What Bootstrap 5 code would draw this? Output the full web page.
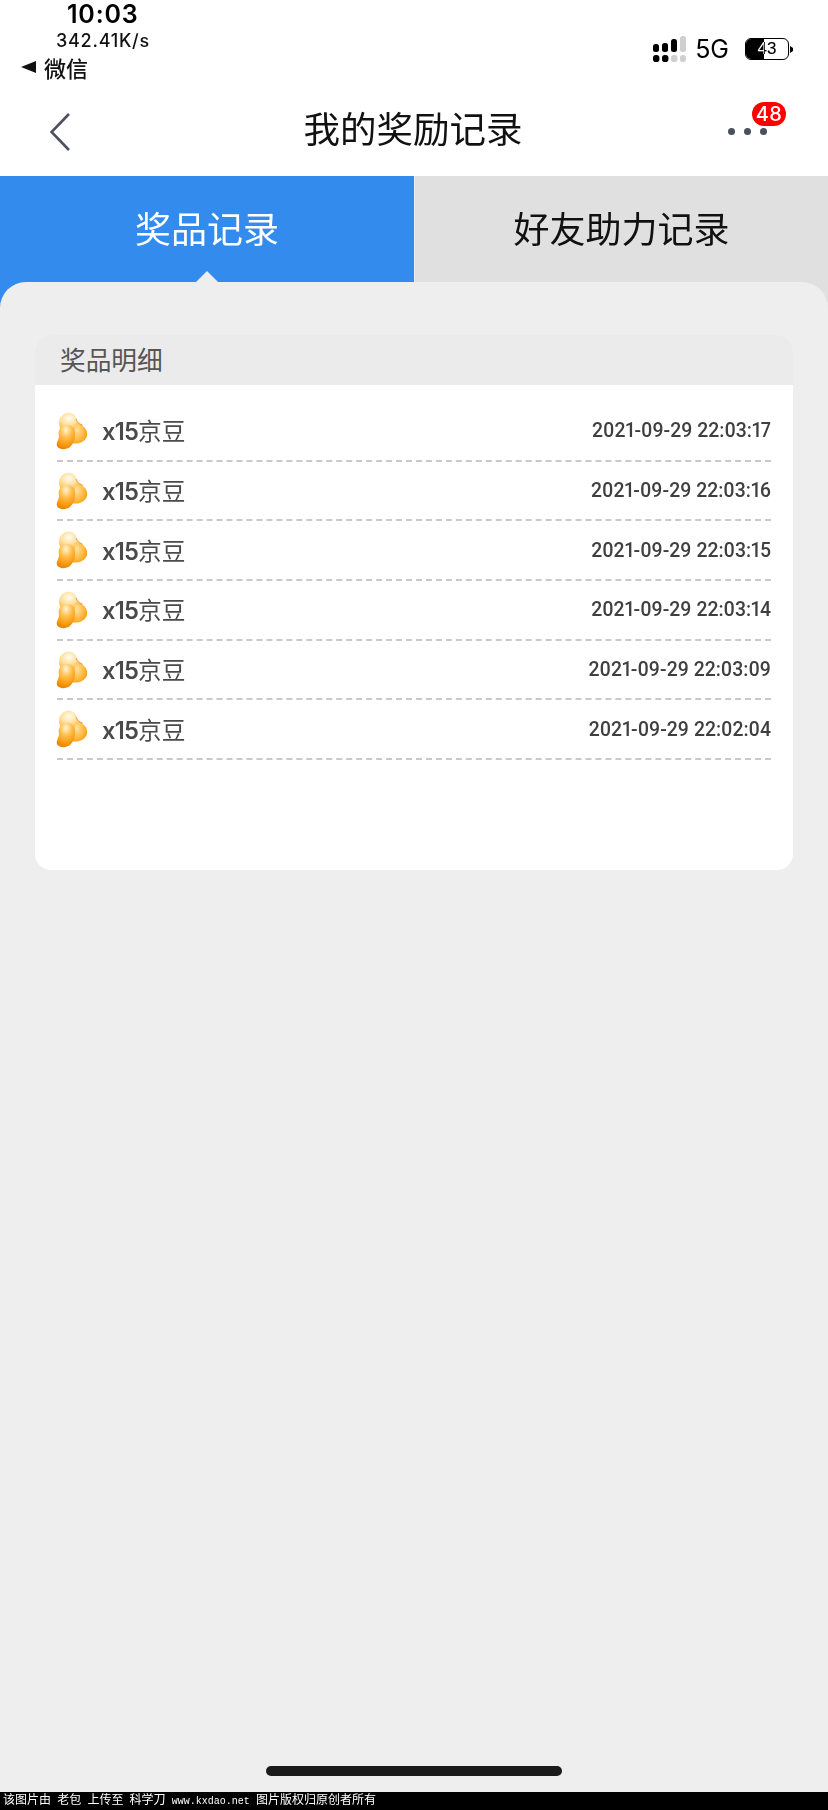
<!DOCTYPE html>
<html lang="zh">
<head>
  <meta charset="UTF-8" />
  <meta name="viewport" content="width=device-width, initial-scale=1.0"/>
  <title>我的奖励记录</title>
  <link href="https://cdn.jsdelivr.net/npm/bootstrap@5.3.3/dist/css/bootstrap.min.css" rel="stylesheet">
  <style>
    html, body { margin: 0; background: #eee; }
    body { font-family: "Noto Sans CJK SC", sans-serif; }
    .screen { width: 828px; height: 1810px; overflow: hidden; }
    .top-area { height: 176px; background: #fff; }
    .status-bar { height: 84px; padding: 0 35px 0 21px; }
    .status-left { width: 162px; }
    .clock { font: 600 25px/28px Inter, "Liberation Sans", sans-serif; padding-left: 46px; color: #000; letter-spacing: .8px; }
    .speed { font: 500 18px/22px Inter, "Liberation Sans", sans-serif; padding-left: 35px; color: #111; margin-top: 2px; letter-spacing: .75px; white-space: nowrap; }
    .back-app { font-size: 22px; font-weight: 500; line-height: 30px; color: #111; }
    .back-app svg { margin-right: 8px; }
    .status-right { margin-top: 35px; }
    .net { font: 400 25px/28px Inter, "Liberation Sans", sans-serif; color: #000; margin: 0 16px 0 9px; }
    .batt { width: 44px; height: 22px; border: 1.5px solid #000; border-radius: 6px; overflow: hidden; }
    .batt-fill { width: 43%; background: #000; }
    .batt-num { font: 500 17px/19px "Liberation Sans", sans-serif; left: 0; right: 0; top: 0; text-align: center; color: #fff; mix-blend-mode: difference; }
    .title-bar { height: 92px; }
    .title-text { font-size: 36.5px; line-height: 48px; color: #111; margin-top: -4px; margin-right: 2px; }
    .back-btn { left: 50px; top: 29px; }
    .more-dots { left: 728px; top: 44px; }
    .dot-item { width: 7px; height: 7px; background: #4b5060; border-radius: 50%; margin-right: 9px; }
    .more-count { left: 752px; top: 18px; width: 34px; height: 24px; background: #f00; color: #fff; border-radius: 12px; font: 500 20px/24px Inter, "Liberation Sans", sans-serif; text-align: center; letter-spacing: .5px; }
    .tab-strip { height: 132px; }
    .tab-on { width: 414px; background: #338bee; color: #fff; }
    .tab-off { width: 413px; margin-left: 1px; background: #e0e0e0; color: #111; }
    .tab-label { font-size: 36px; line-height: 102px; text-align: center; }
    .prize-panel { margin-top: -26px; background: #eee; border-radius: 26px 26px 0 0; padding: 53px 35px 0; }
    .tab-arrow { left: 196px; top: -11px; width: 0; height: 0; border-left: 11px solid transparent; border-right: 11px solid transparent; border-bottom: 11px solid #eee; }
    .prize-box { height: 535px; background: #fff; border-radius: 16px; overflow: hidden; }
    .prize-head { height: 50px; background: #ebebeb; padding-left: 25px; font-size: 25.7px; line-height: 47px; color: #555; }
    .prize-list { padding: 17px 22px 0; }
    .prize-row { height: 59.7px; border-bottom: 2px dashed #c9c9c9; }
    .bean-icon { margin-left: -1px; }
    .prize-name { font-size: 23.7px; color: #4a4a4a; margin-left: 14px; line-height: 32px; margin-top: 1px; }
    .prize-name b { font: 600 23.7px/32px Inter, Roboto, sans-serif; letter-spacing: -.8px; }
    .prize-time { font: 500 19.4px/26px Roboto, sans-serif; font-variant-numeric: proportional-nums; color: #3f3f3f; margin-top: 1px; }
    .home-line { width: 296px; height: 10px; border-radius: 5px; background: #1a1a1a; margin: 0 auto 16px; flex: none; }
    .notice { height: 18px; background: #000; color: #fff; font: 12px/18px "Liberation Mono", "Noto Sans CJK SC", monospace; padding-left: 3px; white-space: pre; word-spacing: -1px; flex: none; }
    .notice-url { font-size: 10px; }
  </style>
</head>
<body>
  <div class="screen d-flex flex-column">
    <svg width="0" height="0" class="position-absolute">
      <defs>
        <radialGradient id="beanTop" cx="42%" cy="30%" r="75%">
          <stop offset="0" stop-color="#fffdf0"/>
          <stop offset=".45" stop-color="#ffe0a0"/>
          <stop offset="1" stop-color="#ffab28"/>
        </radialGradient>
        <radialGradient id="beanRight" cx="30%" cy="35%" r="80%">
          <stop offset="0" stop-color="#ffe2a4"/>
          <stop offset=".6" stop-color="#ffb93f"/>
          <stop offset="1" stop-color="#f7980f"/>
        </radialGradient>
        <radialGradient id="beanLow" cx="50%" cy="20%" r="85%">
          <stop offset="0" stop-color="#fff4d4"/>
          <stop offset=".38" stop-color="#ffbf4c"/>
          <stop offset=".78" stop-color="#f8950a"/>
          <stop offset="1" stop-color="#e47d00"/>
        </radialGradient>
        <symbol id="bean" viewBox="0 0 32 38">
          <path d="M4 6C8-1 18-1 21 7 22 11 25 12 27 13 24 20 16 20 8 19 3 17 2 11 4 6Z" fill="url(#beanTop)"/>
          <path d="M20 11 24 13C29 14 32 19 31 24 29 30 22 33 16 31Z" fill="url(#beanRight)"/>
          <path d="M7 14C14 11 20 16 19 23 19 27 18 31 14 35 10 38 3 38 1 34 0 30 3 28 3 24 2 20 3 16 7 14Z" fill="url(#beanLow)"/>
          <path d="M20 7C21 11 24 12 26 13" fill="none" stroke="#e0862a" stroke-width="1" opacity=".7"/>
        </symbol>
      </defs>
    </svg>

    <div class="top-area">
      <div class="status-bar d-flex justify-content-between">
        <div class="status-left">
          <div class="clock">10:03</div>
          <div class="speed">342.41K/s</div>
          <div class="back-app d-flex align-items-center">
            <svg width="15" height="12" viewBox="0 0 15 12"><path d="M0 6 15 0V12Z" fill="#111"/></svg>微信
          </div>
        </div>
        <div class="status-right d-flex align-items-center align-self-start">
          <svg width="33" height="26" viewBox="0 0 33 26">
            <g fill="#000">
              <rect x="0" y="8" width="6" height="8" rx="2.5"/><rect x="9" y="7" width="6" height="9" rx="2.5"/><rect x="18" y="3" width="6" height="13" rx="2.5"/>
              <rect x="0" y="19" width="6.4" height="7" rx="2.8"/><rect x="9" y="19" width="6.4" height="7" rx="2.8"/>
            </g>
            <g fill="#cfcfcf">
              <rect x="27" y="0" width="6" height="16" rx="2.5"/><rect x="18" y="19" width="6.4" height="7" rx="2.8"/><rect x="27" y="19" width="6" height="7" rx="2.8"/>
            </g>
          </svg>
          <span class="net">5G</span>
          <div class="batt position-relative d-flex">
            <div class="batt-fill"></div>
            <span class="batt-num position-absolute">43</span>
          </div>
          <svg width="4" height="9" viewBox="0 0 4 9"><path d="M1 1 4 3V6L1 8Z" fill="#000"/></svg>
        </div>
      </div>
      <div class="title-bar position-relative d-flex justify-content-center align-items-center">
        <svg class="back-btn position-absolute" width="20" height="38" viewBox="0 0 20 38"><path d="M19 1 1.5 19 19 37" fill="none" stroke="#4b5060" stroke-width="2.6"/></svg>
        <div class="title-text">我的奖励记录</div>
        <div class="more-dots position-absolute d-flex"><i class="dot-item"></i><i class="dot-item"></i><i class="dot-item"></i></div>
        <div class="more-count position-absolute">48</div>
      </div>
    </div>

    <div class="tab-strip d-flex">
      <div class="tab-on tab-label">奖品记录</div>
      <div class="tab-off tab-label">好友助力记录</div>
    </div>

    <div class="prize-panel position-relative flex-grow-1">
      <div class="tab-arrow position-absolute"></div>
      <div class="prize-box">
        <div class="prize-head">奖品明细</div>
        <div class="prize-list" id="prizeList"></div>
      </div>
    </div>

    <div class="home-line"></div>
    <div class="notice">该图片由 老包 上传至 科学刀 <span class="notice-url">www.kxdao.net</span> 图片版权归原创者所有</div>
  </div>

  <script>
    const times = ['2021-09-29 22:03:17', '2021-09-29 22:03:16', '2021-09-29 22:03:15',
                   '2021-09-29 22:03:14', '2021-09-29 22:03:09', '2021-09-29 22:02:04'];
    const list = document.getElementById('prizeList');
    times.forEach(t => {
      const row = document.createElement('div');
      row.className = 'prize-row d-flex justify-content-between align-items-center';
      row.innerHTML = `
        <div class="d-flex align-items-center">
          <svg class="bean-icon" width="32" height="38"><use href="#bean"/></svg>
          <span class="prize-name"><b>x15</b>京豆</span>
        </div>
        <span class="prize-time">${t}</span>`;
      list.appendChild(row);
    });
  </script>
  <script src="https://cdn.jsdelivr.net/npm/bootstrap@5.3.3/dist/js/bootstrap.bundle.min.js"></script>
</body>
</html>
